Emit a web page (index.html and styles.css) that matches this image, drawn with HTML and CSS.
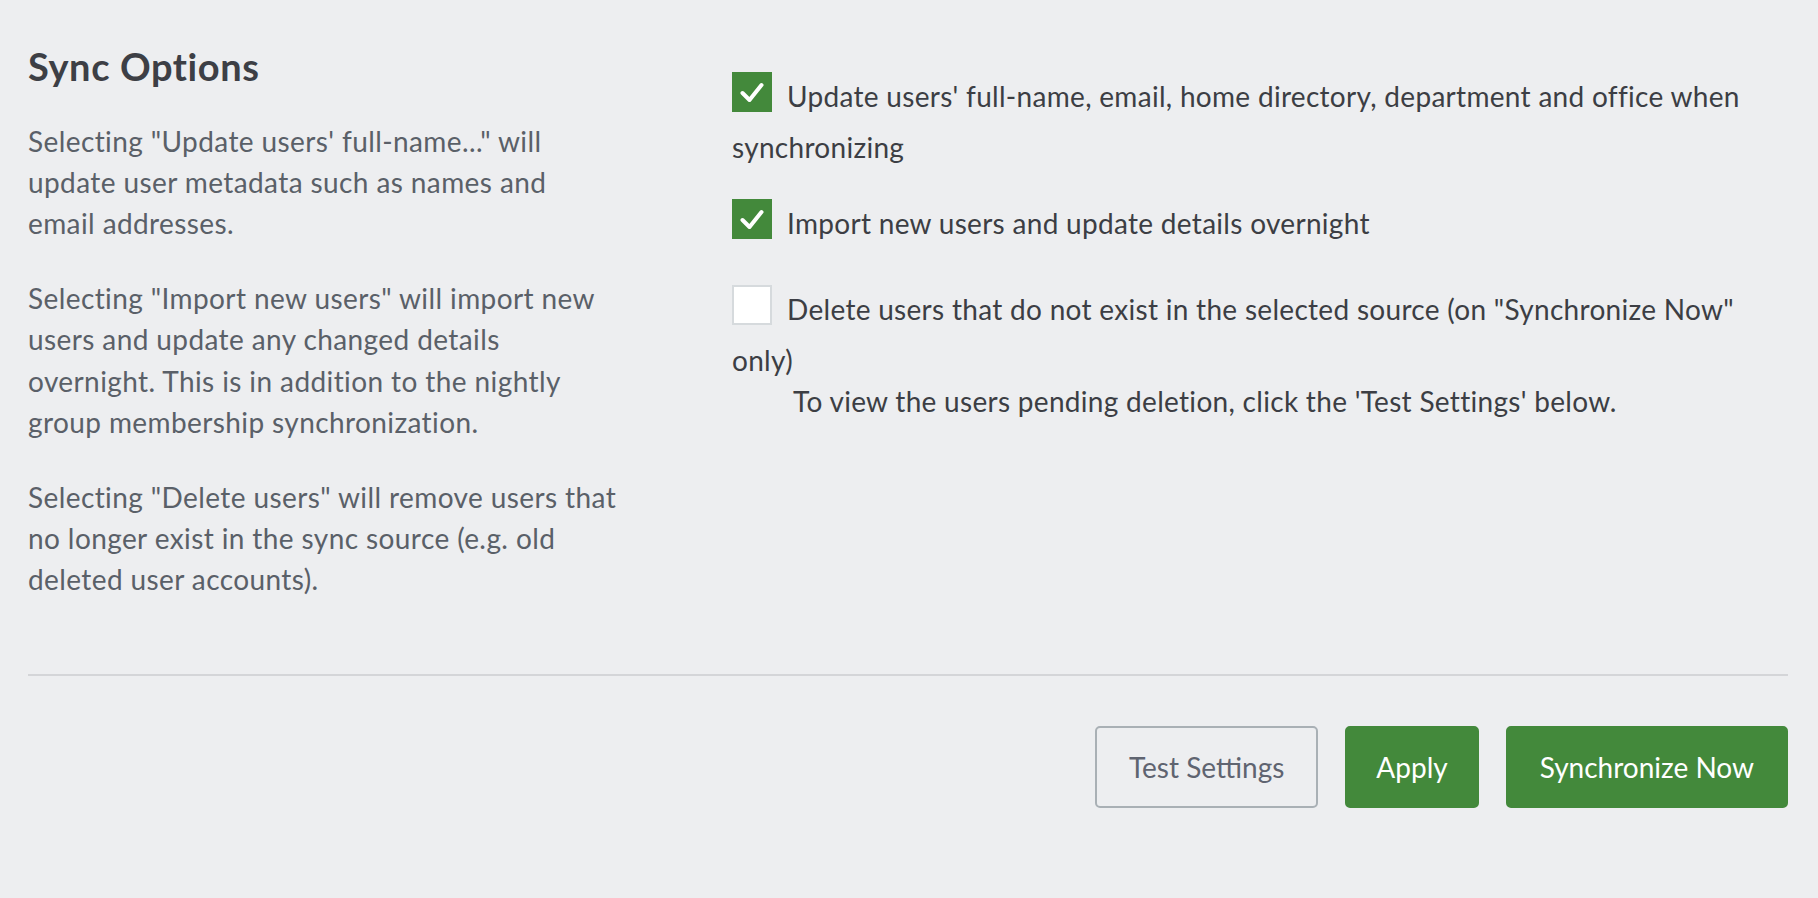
FILE: index.html
```html
<!DOCTYPE html>
<html lang="en">
<head>
<meta charset="utf-8">
<title>Sync Options</title>
<link rel="stylesheet" href="styles.css">
</head>
<body>
<div class="panel">
  <div class="cols">
    <section class="help">
      <h2 class="title">Sync Options</h2>
      <p>Selecting "Update users' full-name..." will update user metadata such as names and email addresses.</p>
      <p>Selecting "Import new users" will import new users and update any changed details overnight. This is in addition to the nightly group membership synchronization.</p>
      <p>Selecting "Delete users" will remove users that no longer exist in the sync source (e.g. old deleted user accounts).</p>
    </section>
    <section class="options">
      <div class="opt"><span class="cb on"><svg viewBox="0 0 40 40" width="40" height="40"><path d="M10.5 21 L17.5 28 L29.5 13" fill="none" stroke="#fff" stroke-width="4" stroke-linecap="round" stroke-linejoin="round"/></svg></span>Update users' full-name, email, home directory, department and office when synchronizing</div>
      <div class="opt"><span class="cb on"><svg viewBox="0 0 40 40" width="40" height="40"><path d="M10.5 21 L17.5 28 L29.5 13" fill="none" stroke="#fff" stroke-width="4" stroke-linecap="round" stroke-linejoin="round"/></svg></span>Import new users and update details overnight</div>
      <div class="opt"><span class="cb"></span>Delete users that do not exist in the selected source (on "Synchronize Now" only)<div class="note">To view the users pending deletion, click the 'Test Settings' below.</div></div>
    </section>
  </div>
  <hr class="sep">
  <div class="actions">
    <button class="btn ghost">Test Settings</button>
    <button class="btn primary apply">Apply</button>
    <button class="btn primary">Synchronize Now</button>
  </div>
</div>
</body>
</html>
```

FILE: styles.css
```css
* { box-sizing: border-box; }
html, body { margin: 0; padding: 0; }
body {
  background: #edeef0;
  font-family: Lato, "Noto Sans", sans-serif;
  width: 1818px;
  height: 898px;
  overflow: hidden;
}
.panel {
  padding: 0 30px 0 28px;
}
.cols {
  display: grid;
  grid-template-columns: 590px 1fr;
  column-gap: 114px;
}
.help {
  color: #5a6068;
  font-size: 28px;
  letter-spacing: 0.4px;
  line-height: 41.3px;
}
.title {
  margin: 44.2px 0 31px;
  font-size: 38px;
  letter-spacing: 0.6px;
  line-height: 1.2;
  font-weight: 700;
  color: #3d3f45;
}
.help p {
  margin: 0 0 33.4px;
}
.help p:last-child { margin-bottom: 0; }
.options {
  padding-top: 72px;
  color: #3c3e44;
  font-size: 28px;
  letter-spacing: 0.3px;
  line-height: 41.3px;
}
.opt {
  margin-bottom: 30.7px;
}
.cb {
  display: inline-block;
  width: 40px;
  height: 40px;
  margin: 0 15px 15px 0;
  vertical-align: -20px;
  background: #fff;
  border: 2px solid #d6dadd;
}
.cb.on {
  background: #43893b;
  border: none;
}
.cb svg { display: block; }
.note {
  padding-left: 61px;
}
.sep {
  margin: 73.5px 0 0;
  border: none;
  height: 2px;
  background: #d4d5d8;
}
.actions {
  display: flex;
  justify-content: flex-end;
  gap: 27px;
  margin-top: 50px;
}
.btn {
  height: 82px;
  padding: 0 32px;
  font-family: Lato, "Noto Sans", sans-serif;
  font-size: 28px;
  border-radius: 5px;
  cursor: pointer;
}
.btn.apply {
  padding: 0 29px;
}
.btn.ghost {
  background: transparent;
  border: 2px solid #a9b0b5;
  color: #5f6470;
}
.btn.primary {
  background: #43893b;
  border: 2px solid #43893b;
  color: #fff;
}
```
